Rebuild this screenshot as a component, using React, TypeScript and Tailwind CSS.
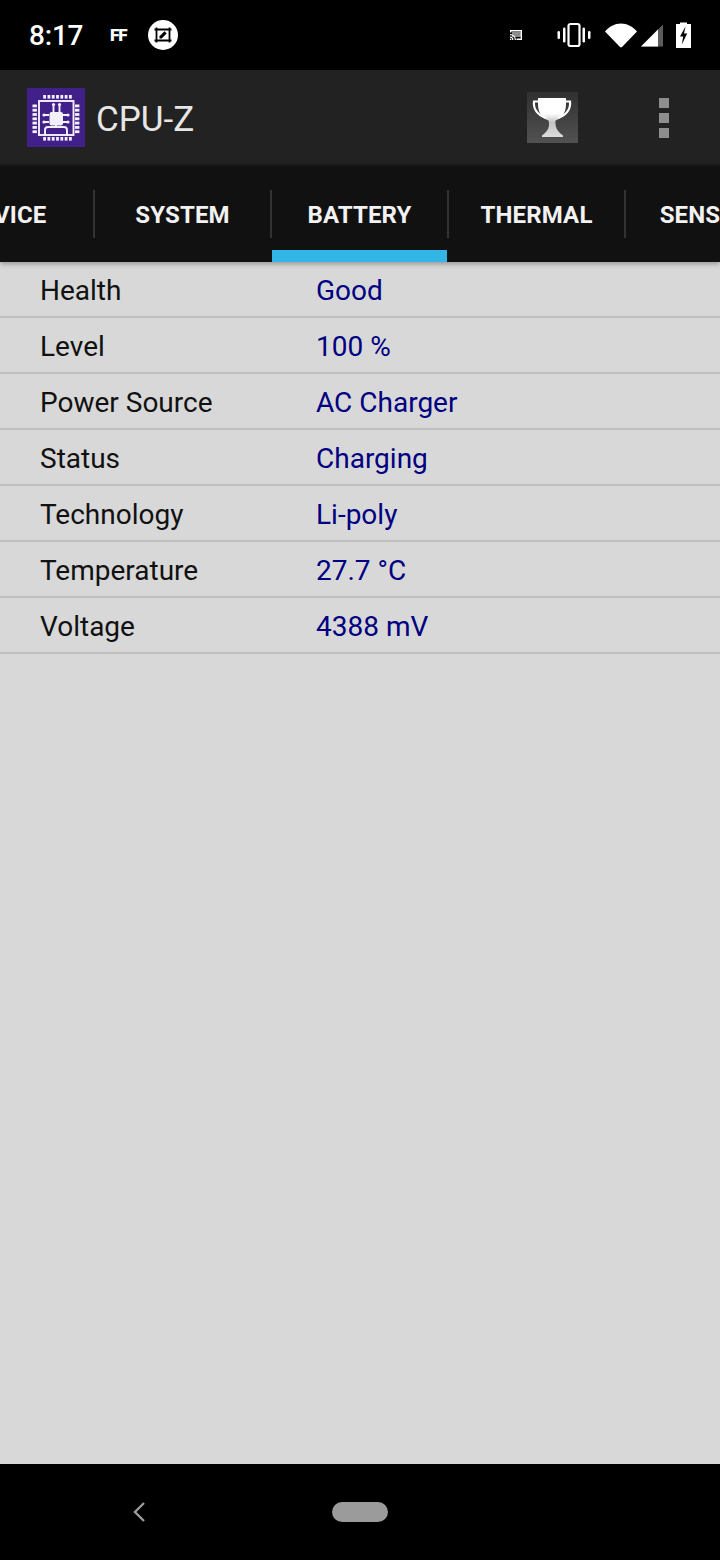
const rows: [string, string][] = [
  ["Health", "Good"],
  ["Level", "100 %"],
  ["Power Source", "AC Charger"],
  ["Status", "Charging"],
  ["Technology", "Li-poly"],
  ["Temperature", "27.7 °C"],
  ["Voltage", "4388 mV"],
];

const tabs = ["DEVICE", "SYSTEM", "BATTERY", "THERMAL", "SENSORS"];

function CpuLogo() {
  const pins = [0, 1, 2, 3, 4, 5, 6];
  return (
    <svg width="58" height="59" viewBox="0 0 58 59" className="block">
      <rect width="58" height="59" fill="#41208a" />
      <g fill="#f4f0fa">
        {pins.map((i) => (
          <g key={i}>
            <rect x={16.2 + i * 4.3} y="7" width="2.8" height="3.6" />
            <rect x={16.2 + i * 4.3} y="49" width="2.8" height="3.6" />
            <rect x="5.500" y={16.500 + i * 4.300} width="4.400" height="2.800" />
            <rect x="48" y={16.500 + i * 4.300} width="4.400" height="2.800" />
          </g>
        ))}
        <rect x="22.500" y="24" width="13.500" height="13.500" rx="2" />
        <circle cx="26.500" cy="16.500" r="1.600" />
        <circle cx="32.500" cy="16.500" r="1.600" />
        <circle cx="17" cy="27" r="1.600" />
        <circle cx="17" cy="34" r="1.600" />
        <circle cx="41" cy="27" r="1.600" />
        <circle cx="41" cy="34" r="1.600" />
      </g>
      <g fill="none" stroke="#f4f0fa" strokeWidth="1.900">
        <rect x="12" y="13" width="34.500" height="34" />
        <path d="M26.500 24v-7M32.500 24v-7M22 27h-5M22 34h-5M36 27h5M36 34h5" />
        <path d="M18 47v-5a3 3 0 0 1 3-3h16a3 3 0 0 1 3 3v5M29 37v2" />
      </g>
    </svg>
  );
}

function Trophy() {
  return (
    <svg width="51" height="51" viewBox="0 0 51 51" className="block">
      <defs>
        <linearGradient id="bg" x1="0" y1="0" x2="0" y2="1">
          <stop offset="0" stopColor="#303030" />
          <stop offset="1" stopColor="#525252" />
        </linearGradient>
        <linearGradient id="cup" x1="0" y1="0" x2="0" y2="1">
          <stop offset="0.4" stopColor="#ffffff" />
          <stop offset="0.62" stopColor="#c4c4c4" />
          <stop offset="1" stopColor="#dcdcdc" />
        </linearGradient>
      </defs>
      <rect width="51" height="51" fill="url(#bg)" />
      <path d="M11 6h28v6c0 9-4 14-10.500 16.500C28 34 29.500 39 36 43.500V45H15v-1.500C21.500 39 23 34 21.500 28.500 15 26 11 21 11 12z" fill="url(#cup)" />
      <path d="M12 9.500H7C6 17 11 23.500 19 26M38 9.500h5C44 17 39 23.500 31 26" fill="none" stroke="#ffffff" strokeWidth="2.200" />
    </svg>
  );
}

function StatusRight() {
  return (
    <div className="flex items-center">
      <svg width="14" height="12" viewBox="0 0 14 12" className="mr-[34px] block">
        <path d="M1 1h12v10H7.500V9.500h4.200v-7H2.300v1H1z" fill="#fff" />
        <path d="M1 5a6 6 0 0 1 6 6H5.800A4.800 4.800 0 0 0 1 6.200zM1 7.500A3.500 3.500 0 0 1 4.500 11H3.300A2.300 2.300 0 0 0 1 8.700zM1 9.500A1.500 1.500 0 0 1 2.500 11H1z" fill="#fff" />
        <rect x="3" y="3" width="9" height="5" fill="#fff" opacity="0.55" />
      </svg>
      <svg width="34" height="26" viewBox="0 0 34 26" className="mr-[14px] block">
        <rect x="11.500" y="2" width="11" height="22" rx="2" fill="none" stroke="#fff" strokeWidth="2.200" />
        <rect x="6" y="5.500" width="2.500" height="15" rx="1.200" fill="#fff" />
        <rect x="25.500" y="5.500" width="2.500" height="15" rx="1.200" fill="#fff" />
        <rect x="0.500" y="9" width="2.500" height="8" rx="1.200" fill="#fff" />
        <rect x="31" y="9" width="2.500" height="8" rx="1.200" fill="#fff" />
      </svg>
      <svg width="32" height="25" viewBox="0 0 32 25" className="mr-[4px] block">
        <path d="M0 8.500C4 3.500 10 0.500 16 0.500s12 3 16 8L17.500 23.500a2 2 0 0 1-3 0z" fill="#fff" />
      </svg>
      <svg width="23" height="23" viewBox="0 0 23 23" className="mr-[12px] block">
        <path d="M22 0.500V22.500H0z" fill="#5c5c5c" />
        <path d="M17 5.500V22.500H0z" fill="#fff" />
      </svg>
      <svg width="15" height="26" viewBox="0 0 15 26" className="block">
        <path d="M4 2V0.500h7V2h4v24H0V2z" fill="#fff" />
        <path d="M9.500 4.500 4 14.500h3.200L5.800 22.500 11.200 11.500H8z" fill="#000" />
      </svg>
    </div>
  );
}

export default function App() {
  return (
    <div className="flex h-[1560px] w-[720px] flex-col overflow-hidden bg-[#d8d8d8] font-['Roboto',sans-serif]">
      <div className="flex h-[70px] shrink-0 items-center justify-between bg-black pl-[29px] pr-[29px]">
        <div className="flex items-center">
          <span className="mt-[2px] w-[53px] text-[28px] font-medium leading-none tracking-[-0.2px] text-white">8:17</span>
          <span className="ml-[28px] w-[19px] text-[17px] font-black leading-none tracking-[-1px] text-white">FF</span>
          <div className="ml-[19px] flex h-[30px] w-[30px] items-center justify-center rounded-full bg-white">
            <svg width="20" height="20" viewBox="0 0 20 20" className="block">
              <path d="M1.500 4.500h17M1.500 15.500h17M3.500 2.500v15M16.500 2.500v15" fill="none" stroke="#000" strokeWidth="1.800" />
              <path d="M6.500 13.500v-2.200l5-5 2.200 2.200-5 5z" fill="#000" />
            </svg>
          </div>
        </div>
        <StatusRight />
      </div>

      <div className="flex h-[94px] shrink-0 items-center bg-[#222222] pl-[27px] pr-[51px]">
        <CpuLogo />
        <span className="ml-[11px] mt-[5px] text-[35px] leading-none text-[#e6e6e6]">CPU-Z</span>
        <div className="ml-auto flex items-center">
          <Trophy />
          <div className="ml-[81px] mt-[2px] flex flex-col gap-[5px]">
            <div className="h-[10px] w-[10px] bg-[#8e8e8e]" />
            <div className="h-[10px] w-[10px] bg-[#8e8e8e]" />
            <div className="h-[10px] w-[10px] bg-[#8e8e8e]" />
          </div>
        </div>
      </div>

      <div className="relative z-10 flex h-[98px] shrink-0 overflow-hidden border-t-[2px] border-[#181818] bg-[#111111] shadow-[0_2px_5px_rgba(0,0,0,0.3)]">
        <div className="-ml-[83px] flex">
          {tabs.map((t, i) => (
            <div key={t} className="relative flex h-[96px] w-[177px] shrink-0 items-start justify-center">
              <span className="mt-[35px] text-[24px] font-bold leading-[28px] tracking-[0.15px] text-[#f2f2f2]">{t}</span>
              {i < 4 && <div className="absolute right-[-1px] top-[24px] h-[48px] w-[2px] bg-[#333333]" />}
              {t === "BATTERY" && <div className="absolute bottom-0 left-[1px] right-[1px] h-[12px] bg-[#33b5e5]" />}
            </div>
          ))}
        </div>
      </div>

      <div className="flex-1 bg-[#d8d8d8]">
        {rows.map(([k, v]) => (
          <div key={k} className="flex h-[56px] items-center border-b-[2px] border-[#bfbfbf] pl-[40px] pt-[4px]">
            <span className="w-[276px] text-[28px] leading-none text-[#111111]">{k}</span>
            <span className="text-[28px] leading-none text-[#000080]">{v}</span>
          </div>
        ))}
      </div>

      <div className="relative flex h-[96px] shrink-0 items-center justify-center bg-black">
        <svg width="16" height="22" viewBox="0 0 16 22" className="absolute left-[131px] top-[37px] block">
          <path d="M13 2 4 11l9 9" fill="none" stroke="#9a9a9a" strokeWidth="2.400" />
        </svg>
        <div className="h-[20px] w-[56px] rounded-[10px] bg-[#9b9b9b]" />
      </div>
    </div>
  );
}
